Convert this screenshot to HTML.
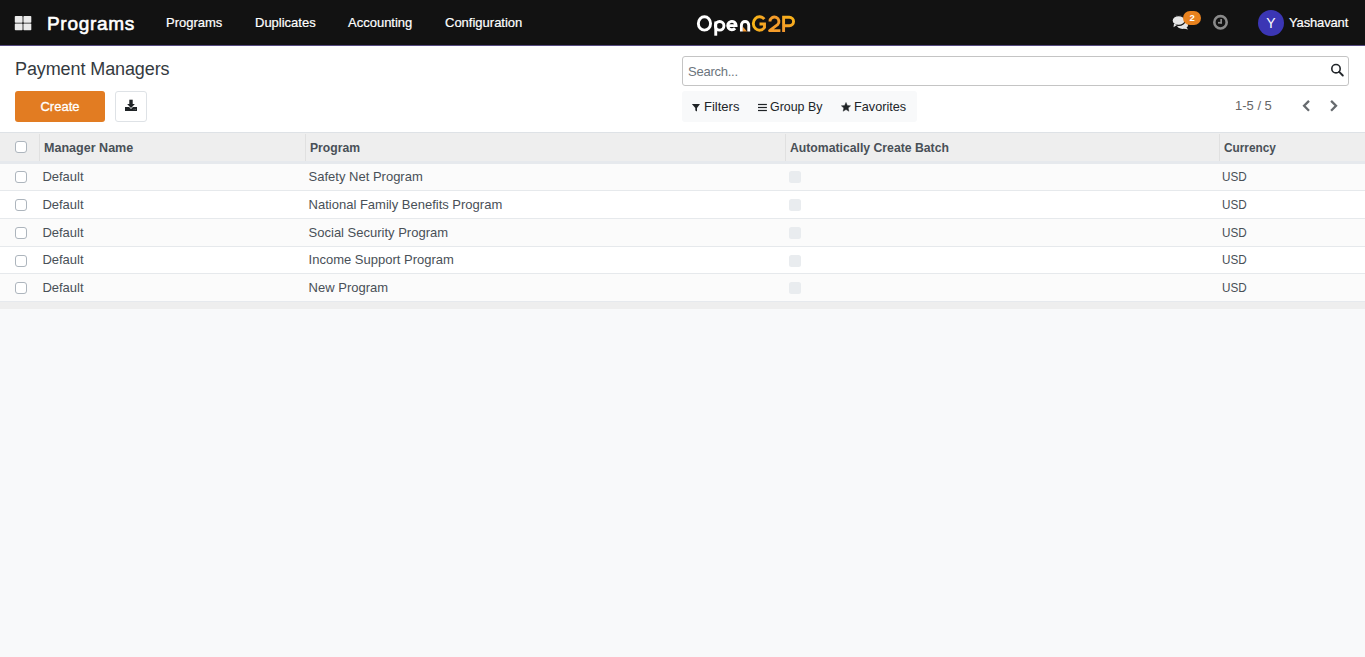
<!DOCTYPE html>
<html>
<head>
<meta charset="utf-8">
<style>
*{box-sizing:border-box;margin:0;padding:0}
html,body{width:1365px;height:657px;overflow:hidden}
body{font-family:"Liberation Sans",sans-serif;font-size:13px;color:#495057;background:#f8f9fa;position:relative}
.abs{position:absolute;white-space:nowrap}
#nav{position:absolute;left:0;top:0;width:1365px;height:46px;background:#121212;border-bottom:1px solid #564b80}
.nt{color:#fff;font-size:13px;line-height:15px;-webkit-text-stroke:0.2px #fff}
#cp{position:absolute;left:0;top:46px;width:1365px;height:86px;background:#fff}
#tbl{position:absolute;left:0;top:0;width:1365px}
.row{position:absolute;left:0;width:1365px}
.cb{position:absolute;width:12px;height:12px;border:1px solid #adb5bd;border-radius:3px;background:#fff}
.dcb{position:absolute;width:12px;height:12px;border-radius:2.5px;background:#e9ecef}
.th{font-weight:bold;transform-origin:0 0;color:#495057;line-height:15px}
.td{line-height:15px;color:#495057}
</style>
</head>
<body>
<div id="nav">
  <!-- apps grid -->
  <svg class="abs" style="left:0;top:0" width="40" height="46" viewBox="0 0 40 46"><g fill="#eaeaea">
    <rect x="14.8" y="15.9" width="7.8" height="6.9" rx="0.8"/><rect x="23.4" y="15.9" width="7.9" height="6.9" rx="0.8"/>
    <rect x="14.8" y="23.6" width="7.8" height="6.6" rx="0.8"/><rect x="23.4" y="23.6" width="7.9" height="6.6" rx="0.8"/></g></svg>
  <div class="abs nt" style="left:47px;top:12px;font-size:19px;line-height:23px;-webkit-text-stroke:0.6px #fff;letter-spacing:0.7px">Programs</div>
  <div class="abs nt" style="left:166px;top:15px">Programs</div>
  <div class="abs nt" style="left:255px;top:15px">Duplicates</div>
  <div class="abs nt" style="left:348px;top:15px">Accounting</div>
  <div class="abs nt" style="left:445px;top:15px">Configuration</div>
  <!-- logo -->
  <svg class="abs" style="left:0;top:0" width="1365" height="46" viewBox="0 0 1365 46">
  <defs>
    <linearGradient id="gG" x1="752" y1="0" x2="766" y2="0" gradientUnits="userSpaceOnUse"><stop offset="0" stop-color="#f9b815"/><stop offset="1" stop-color="#f4a126"/></linearGradient>
    <linearGradient id="gP" x1="783" y1="32" x2="795" y2="16" gradientUnits="userSpaceOnUse"><stop offset="0" stop-color="#f2952e"/><stop offset="1" stop-color="#f9b716"/></linearGradient>
  </defs>
  <g fill="none" stroke="#fff" stroke-width="2.9">
    <ellipse cx="704.45" cy="23.45" rx="6.1" ry="6.7"/>
    <line x1="715.75" y1="21.5" x2="715.75" y2="35.7"/>
    <ellipse cx="719.65" cy="25.85" rx="4.3" ry="4.3"/>
    <path d="M727.7,25.6 H736.1 A4.2 4.2 0 1 0 735.1,28.3"/>
    <path d="M741.4,31.4 V25.2 A3.675 3.675 0 0 1 748.75,25.2 V31.4"/>
  </g>
  <polygon points="742.85,26.7 747.1,31.4 742.85,31.4" fill="#f3962c"/>
  <path d="M764.3,19.2 A6.2 6.7 0 1 0 764.5,27.5 V24 H759.5" fill="none" stroke="url(#gG)" stroke-width="2.9"/>
  <path d="M769.95,21.5 A4.5 4.5 0 1 1 777.6,24.7 L769.6,30.6 H780.4" fill="none" stroke="#f49c2a" stroke-width="2.9" stroke-linejoin="round"/>
  <path d="M783.6,32 V17.25 H789.3 A4.25 4.25 0 0 1 789.3,25.75 H783.6" fill="none" stroke="url(#gP)" stroke-width="2.9"/>
</svg>
  <!-- chat -->
  <!-- clock -->
  
  <!-- avatar -->
  <div class="abs" style="left:1258px;top:10px;width:26px;height:26px;border-radius:50%;background:#3b36b4;color:#fff;font-size:14px;line-height:26px;text-align:center">Y</div>
  <div class="abs nt" style="left:1289px;top:15px;letter-spacing:-0.15px">Yashavant</div>
</div>

<div id="cp">
  <div class="abs" style="left:15px;top:13px;font-size:18px;line-height:21px;color:#343a40;letter-spacing:-0.1px">Payment Managers</div>
  <div class="abs" style="left:15px;top:45px;width:90px;height:31px;background:#e27c22;border-radius:3px;color:#fff;text-align:center;line-height:31px;font-size:13px;-webkit-text-stroke:0.3px #fff">Create</div>
  <div class="abs" style="left:115px;top:45px;width:32px;height:31px;border:1px solid #dee2e6;border-radius:3px;background:#fff"></div>
  <!-- search -->
  <div class="abs" style="left:682px;top:10px;width:667px;height:30px;border:1px solid #c4c4c4;border-radius:3px;background:#fff"></div>
  <div class="abs" style="left:688px;top:18px;line-height:15px;color:#6c757d;letter-spacing:-0.25px">Search...</div>
  <!-- filter bar -->
  <div class="abs" style="left:682px;top:45px;width:235px;height:31px;background:#f8f9fa;border-radius:3px"></div>
  <div class="abs" style="left:704px;top:53px;line-height:15px;color:#212529">Filters</div>
  <div class="abs" style="left:770px;top:53px;line-height:15px;color:#212529;transform:scaleX(0.955);transform-origin:0 0">Group By</div>
  <div class="abs" style="left:854px;top:53px;line-height:15px;color:#212529;transform:scaleX(0.975);transform-origin:0 0">Favorites</div>
  <div class="abs" style="left:1235px;top:52px;line-height:15px;color:#666">1-5 / 5</div>
</div>

<div id="tbl">
<div class="abs" style="left:0;top:132px;width:1365px;height:1px;background:#dee2e6"></div>
<div class="abs" style="left:0;top:133px;width:1365px;height:28px;background:#eee"></div>
<div class="abs" style="left:0;top:161px;width:1365px;height:3px;background:#e6e9ed"></div>
<div class="abs" style="left:39px;top:134px;width:1px;height:27px;background:#e0e0e0"></div>
<div class="abs" style="left:305px;top:134px;width:1px;height:27px;background:#e0e0e0"></div>
<div class="abs" style="left:785px;top:134px;width:1px;height:27px;background:#e0e0e0"></div>
<div class="abs" style="left:1219px;top:134px;width:1px;height:27px;background:#e0e0e0"></div>
<div class="cb" style="left:15px;top:141px"></div>
<div class="abs th" style="left:43.5px;top:140px;transform:scaleX(0.965)">Manager Name</div>
<div class="abs th" style="left:309.6px;top:140px;transform:scaleX(0.935)">Program</div>
<div class="abs th" style="left:789.6px;top:140px;transform:scaleX(0.94)">Automatically Create Batch</div>
<div class="abs th" style="left:1223.6px;top:140px;transform:scaleX(0.91)">Currency</div>
<div class="abs" style="left:0;top:164px;width:1365px;height:26px;background:#fbfbfb"></div>
<div class="abs" style="left:0;top:190px;width:1365px;height:1px;background:#e6e9ec"></div>
<div class="cb" style="left:15px;top:171px"></div>
<div class="abs td" style="left:42.4px;top:169px">Default</div>
<div class="abs td" style="left:308.6px;top:169px">Safety Net Program</div>
<div class="dcb" style="left:789px;top:171px"></div>
<div class="abs td" style="left:1222px;top:169px;transform:scaleX(0.9);transform-origin:0 0">USD</div>
<div class="abs" style="left:0;top:191px;width:1365px;height:27px;background:#fff"></div>
<div class="abs" style="left:0;top:218px;width:1365px;height:1px;background:#e6e9ec"></div>
<div class="cb" style="left:15px;top:199px"></div>
<div class="abs td" style="left:42.4px;top:197px">Default</div>
<div class="abs td" style="left:308.6px;top:197px">National Family Benefits Program</div>
<div class="dcb" style="left:789px;top:199px"></div>
<div class="abs td" style="left:1222px;top:197px;transform:scaleX(0.9);transform-origin:0 0">USD</div>
<div class="abs" style="left:0;top:219px;width:1365px;height:27px;background:#fbfbfb"></div>
<div class="abs" style="left:0;top:246px;width:1365px;height:1px;background:#e6e9ec"></div>
<div class="cb" style="left:15px;top:227px"></div>
<div class="abs td" style="left:42.4px;top:225px">Default</div>
<div class="abs td" style="left:308.6px;top:225px">Social Security Program</div>
<div class="dcb" style="left:789px;top:227px"></div>
<div class="abs td" style="left:1222px;top:225px;transform:scaleX(0.9);transform-origin:0 0">USD</div>
<div class="abs" style="left:0;top:247px;width:1365px;height:26px;background:#fff"></div>
<div class="abs" style="left:0;top:273px;width:1365px;height:1px;background:#e6e9ec"></div>
<div class="cb" style="left:15px;top:255px"></div>
<div class="abs td" style="left:42.4px;top:252px">Default</div>
<div class="abs td" style="left:308.6px;top:252px">Income Support Program</div>
<div class="dcb" style="left:789px;top:255px"></div>
<div class="abs td" style="left:1222px;top:252px;transform:scaleX(0.9);transform-origin:0 0">USD</div>
<div class="abs" style="left:0;top:274px;width:1365px;height:27px;background:#fbfbfb"></div>
<div class="cb" style="left:15px;top:282px"></div>
<div class="abs td" style="left:42.4px;top:280px">Default</div>
<div class="abs td" style="left:308.6px;top:280px">New Program</div>
<div class="dcb" style="left:789px;top:282px"></div>
<div class="abs td" style="left:1222px;top:280px;transform:scaleX(0.9);transform-origin:0 0">USD</div>
<div class="abs" style="left:0;top:301px;width:1365px;height:1px;background:#e6e9ed"></div>
<div class="abs" style="left:0;top:302px;width:1365px;height:7px;background:#eee"></div>

</div>

<svg class="abs" style="left:0;top:0" width="1365" height="657" viewBox="0 0 1365 657">
  <!-- download -->
  <g fill="#1f2326">
    <rect x="129.3" y="99.7" width="3.4" height="4.6"/>
    <polygon points="127.1,103.9 134.9,103.9 131,107.9"/>
    <polygon points="125,107 129.1,107 131,108.9 132.9,107 137,107 137,111 125,111"/>
  </g>
  <circle cx="134" cy="109.4" r="0.45" fill="#aaa"/><circle cx="135.5" cy="109.4" r="0.45" fill="#aaa"/>
  <!-- search -->
  <circle cx="1336" cy="68.7" r="4.2" fill="none" stroke="#212529" stroke-width="1.6"/>
  <line x1="1339.2" y1="71.9" x2="1342.8" y2="75.5" stroke="#212529" stroke-width="1.9" stroke-linecap="round"/>
  <!-- filter -->
  <polygon points="691.9,103.9 700,103.9 697,108 697,111.5 695.3,110.6 695.3,108" fill="#1f2326"/>
  <!-- bars -->
  <g fill="#1f2326"><rect x="758" y="103.9" width="8.9" height="1.2"/><rect x="758" y="106.9" width="8.9" height="1.2"/><rect x="758" y="109.9" width="8.9" height="1.2"/></g>
  <!-- star -->
  <polygon points="846.00,102.40 847.35,105.44 850.66,105.79 848.19,108.01 848.88,111.26 846.00,109.60 843.12,111.26 843.81,108.01 841.34,105.79 844.65,105.44" fill="#1f2326" stroke="#1f2326" stroke-width="0.4" stroke-linejoin="round"/>
  <!-- chevrons -->
  <polyline points="1309,100.9 1304.1,105.8 1309,110.7" fill="none" stroke="#666a6e" stroke-width="2.3"/>
  <polyline points="1331.1,100.9 1336,105.8 1331.1,110.7" fill="none" stroke="#666a6e" stroke-width="2.3"/>
  <!-- chat -->
  <ellipse cx="1182.5" cy="25" rx="5.6" ry="3.9" fill="#e4e4e4"/>
  <polygon points="1186,27 1188.2,29.4 1183.5,28.5" fill="#e4e4e4"/>
  <ellipse cx="1178.6" cy="20.5" rx="6.5" ry="4.9" fill="#e6e6e6" stroke="#121212" stroke-width="1.1"/>
  <polygon points="1174,23.5 1177,25 1173.5,27.2" fill="#e6e6e6"/>
  <!-- clock -->
  <circle cx="1220.5" cy="22.3" r="6.2" fill="none" stroke="#8a8a8a" stroke-width="2.6"/>
  <rect x="1220.3" y="19" width="1.7" height="4.6" fill="#8a8a8a"/>
  <rect x="1218" y="21.9" width="4" height="1.7" fill="#8a8a8a"/>
</svg>
<div class="abs" style="left:1183px;top:11px;width:18px;height:14px;border-radius:7px;background:#e8821e;color:#fff;font-size:9.5px;font-weight:bold;text-align:center;line-height:14px;padding-left:0.5px">2</div>
</body>
</html>
